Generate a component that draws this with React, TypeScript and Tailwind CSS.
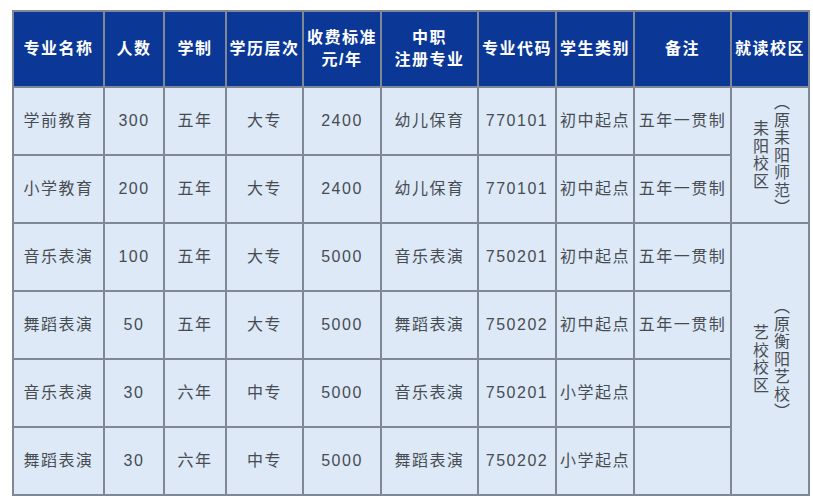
const rows = [
  ['学前教育', '300', '五年', '大专', '2400', '幼儿保育', '770101', '初中起点', '五年一贯制'],
  ['小学教育', '200', '五年', '大专', '2400', '幼儿保育', '770101', '初中起点', '五年一贯制'],
  ['音乐表演', '100', '五年', '大专', '5000', '音乐表演', '750201', '初中起点', '五年一贯制'],
  ['舞蹈表演', '50', '五年', '大专', '5000', '舞蹈表演', '750202', '初中起点', '五年一贯制'],
  ['音乐表演', '30', '六年', '中专', '5000', '音乐表演', '750201', '小学起点', ''],
  ['舞蹈表演', '30', '六年', '中专', '5000', '舞蹈表演', '750202', '小学起点', ''],
];

const widths = [91, 60, 62, 77, 78, 97, 78, 78, 97, 78];

const heads: string[][] = [
  ['专业名称'],
  ['人数'],
  ['学制'],
  ['学历层次'],
  ['收费标准', '元/年'],
  ['中职', '注册专业'],
  ['专业代码'],
  ['学生类别'],
  ['备注'],
  ['就读校区'],
];

function Campus({ lines }: { lines: string[] }) {
  return (
    <div className="flex h-full w-full items-center justify-center">
      <div className="text-center leading-[21px] [writing-mode:vertical-rl]">
        {lines.map((l) => (
          <div key={l}>{l}</div>
        ))}
      </div>
    </div>
  );
}

export default function App() {
  const cell = 'border-2 border-[#7f8893] text-center align-middle';
  return (
    <div className="min-h-[499px] w-[813px] bg-white pl-[12px] pt-[10px] font-['Liberation_Sans','Noto_Sans_CJK_SC',sans-serif]">
      <table className="table-fixed border-collapse text-[16px] tracking-[1.5px]" style={{ width: 797 }}>
        <colgroup>
          {widths.map((w, i) => (
            <col key={i} style={{ width: w }} />
          ))}
        </colgroup>
        <thead>
          <tr className="h-[76px] bg-[#0b3897] text-white">
            {heads.map((h, i) => (
              <th key={i} className={`${cell} font-bold leading-[22px]`}>
                {h.map((t) => (
                  <div key={t}>{t}</div>
                ))}
              </th>
            ))}
          </tr>
        </thead>
        <tbody className="bg-[#dde9f6] text-[#474c53]">
          {rows.map((r, ri) => (
            <tr key={ri} className="h-[68px]">
              {r.map((c, ci) => (
                <td key={ci} className={cell}>
                  {c}
                </td>
              ))}
              {ri === 0 && (
                <td rowSpan={2} className={cell}>
                  <Campus lines={['（原耒阳师范）', '耒阳校区']} />
                </td>
              )}
              {ri === 2 && (
                <td rowSpan={4} className={cell}>
                  <Campus lines={['（原衡阳艺校）', '艺校校区']} />
                </td>
              )}
            </tr>
          ))}
        </tbody>
      </table>
    </div>
  );
}
